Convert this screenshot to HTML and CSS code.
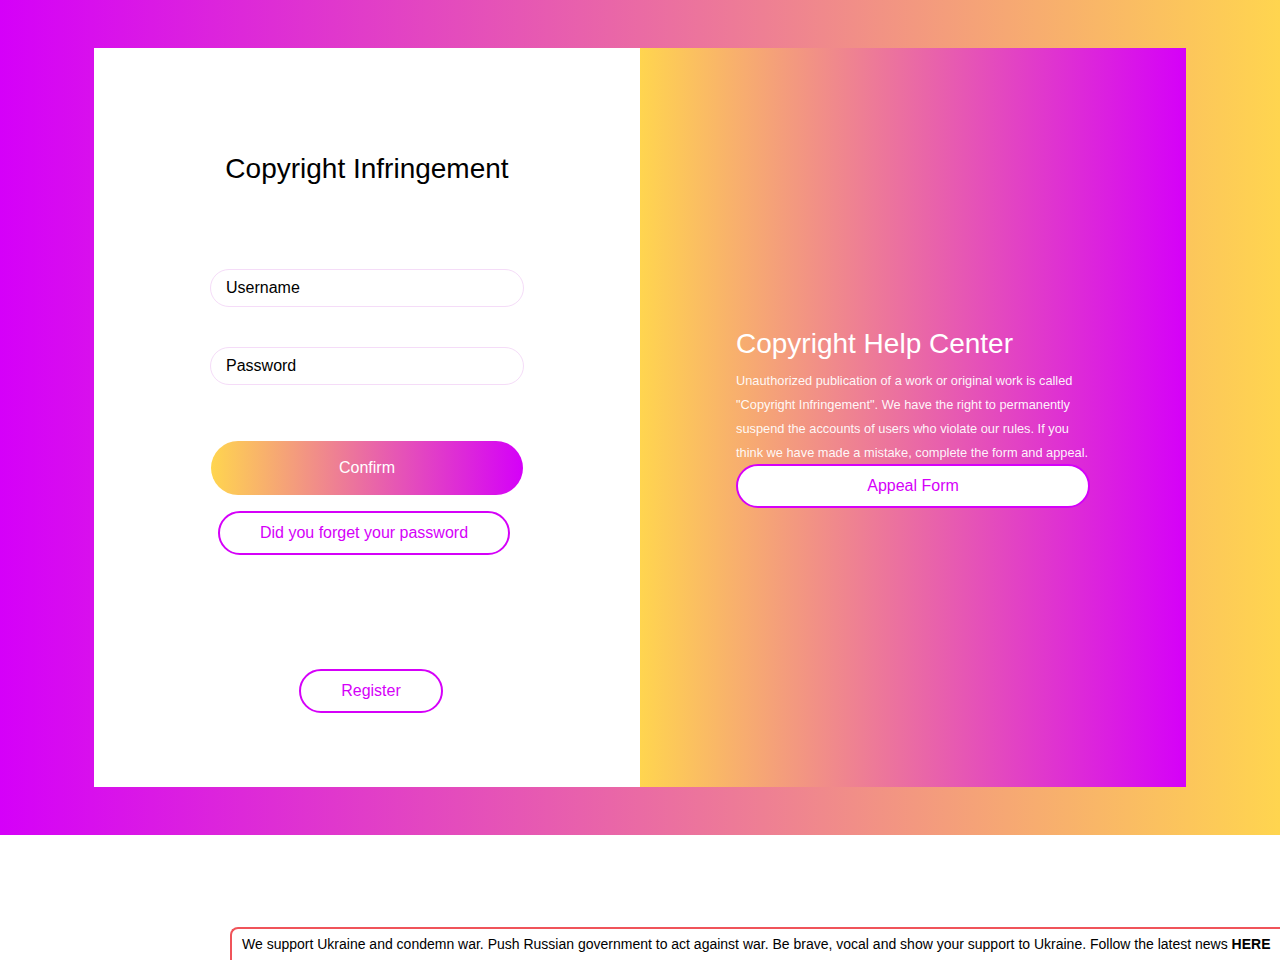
FILE: index.html
```html
<!DOCTYPE html>
<html lang="en">
<head>
<meta charset="utf-8">
<title>Copyright Infringement</title>
<link rel="stylesheet" href="styles.css">
</head>
<body>
<section class="hero">
  <div class="card">
    <div class="panel-left">
      <h1 class="title">Copyright Infringement</h1>
      <form class="form">
        <input class="field" type="text" placeholder="Username">
        <input class="field field-pass" type="password" placeholder="Password">
        <button type="button" class="btn-confirm">Confirm</button>
        <button type="button" class="btn-outline btn-forgot">Did you forget your password</button>
        <button type="button" class="btn-outline btn-register">Register</button>
      </form>
    </div>
    <div class="panel-right">
      <div class="help">
        <h2 class="help-title">Copyright Help Center</h2>
        <p class="help-text">Unauthorized publication of a work or original work is called "Copyright Infringement". We have the right to permanently suspend the accounts of users who violate our rules. If you think we have made a mistake, complete the form and appeal.</p>
        <button type="button" class="btn-outline btn-appeal">Appeal Form</button>
      </div>
    </div>
  </div>
</section>
<div class="banner">We support Ukraine and condemn war. Push Russian government to act against war. Be brave, vocal and show your support to Ukraine. Follow the latest news <b>HERE</b></div>
</body>
</html>
```
FILE: styles.css
```css
* { box-sizing: border-box; }
html, body { margin: 0; padding: 0; }
body {
  font-family: "Liberation Sans", Arial, sans-serif;
  background: #fff;
  color: #000;
  height: 960px;
  overflow: hidden;
}
.hero {
  height: 835px;
  padding: 48px 94px;
  background: linear-gradient(to right, #d500f9, #ffd54f);
}
.card {
  display: flex;
  height: 739px;
}
.panel-left {
  width: 546px;
  background: #fff;
  padding-top: 105px;
  display: flex;
  flex-direction: column;
  align-items: center;
}
.title {
  margin: 0;
  font-size: 28px;
  font-weight: 400;
  line-height: 32px;
  color: #000;
}
.form {
  display: flex;
  flex-direction: column;
  align-items: center;
  margin-top: 84px;
}
.field {
  display: block;
  width: 314px;
  height: 38px;
  border: 1px solid #f5dcf8;
  border-radius: 19px;
  padding: 0 15px;
  font-family: inherit;
  font-size: 16px;
  color: #000;
  background: #fff;
  outline: none;
}
.field::placeholder { color: #000; opacity: 1; }
.field-pass { margin-top: 40px; }
.btn-confirm {
  margin-top: 56px;
  width: 312px;
  height: 54px;
  border: none;
  border-radius: 27px;
  background: linear-gradient(to right, #ffd54f, #d500f9);
  color: #fff;
  font-family: inherit;
  font-size: 16px;
  cursor: pointer;
}
.btn-outline {
  height: 44px;
  border: 2px solid #d500f9;
  border-radius: 22px;
  background: #fff;
  color: #d500f9;
  font-family: inherit;
  font-size: 16px;
  cursor: pointer;
  padding: 0;
}
.btn-forgot {
  margin-top: 16px;
  width: 292px;
  position: relative;
  left: -3px;
}
.btn-register {
  margin-top: 114px;
  width: 144px;
  position: relative;
  left: 4px;
}
.panel-right {
  width: 546px;
  background: linear-gradient(to right, #ffd54f, #d500f9);
  display: flex;
  align-items: center;
  padding: 0 96px;
}
.help { width: 354px; color: #fff; }
.help-title {
  margin: 0 0 9px;
  font-size: 28px;
  font-weight: 400;
  line-height: 32px;
}
.help-text {
  margin: 0;
  font-size: 12.8px;
  line-height: 24px;
  color: rgba(255, 255, 255, 0.95);
}
.btn-appeal {
  display: block;
  width: 354px;
  margin-top: -1px;
}
.banner {
  position: fixed;
  left: 230px;
  right: 0;
  bottom: -10px;
  height: 43px;
  padding: 6px 10px 0 10px;
  background: #fff;
  border: 2px solid #f0545a;
  border-right: none;
  border-radius: 8px 0 0 0;
  font-size: 14px;
  line-height: 18px;
  color: #000;
  white-space: nowrap;
}
```
